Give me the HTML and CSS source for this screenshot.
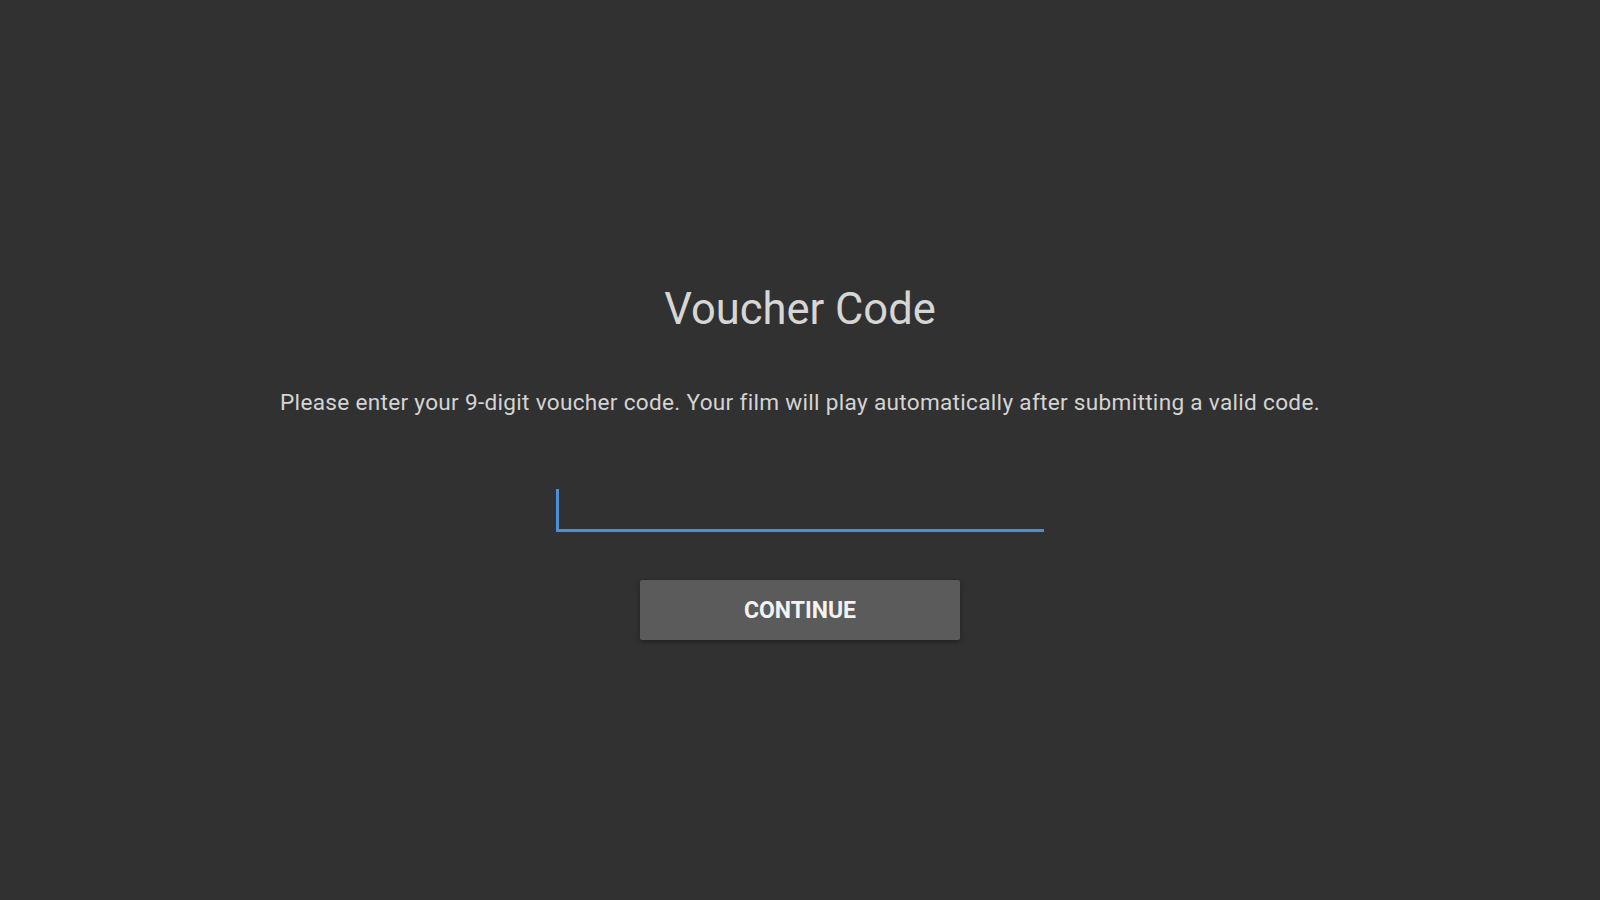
FILE: index.html
```html
<!DOCTYPE html>
<html lang="en">
  <head>
    <meta charset="UTF-8" />
    <meta name="viewport" content="width=device-width, initial-scale=1" />
    <title>Voucher Code</title>
    <link rel="stylesheet" href="styles.css">
  </head>
  <body>
    <main class="voucher">
      <h1>Voucher Code</h1>
      <p class="hint">Please enter your 9-digit voucher code. Your film will play automatically after submitting a valid code.</p>
      <div class="field">
        <span class="caret"></span>
      </div>
      <button class="continue">CONTINUE</button>
    </main>
  </body>
</html>
```

FILE: styles.css
```css
html,
body {
  height: 100%;
}
body {
  margin: 0;
  background: #313131;
  color: #d2d2d2;
  font-family: Roboto, "Liberation Sans", sans-serif;
}
.voucher {
  display: flex;
  flex-direction: column;
  align-items: center;
  padding-top: 282px;
}
.voucher h1 {
  margin: 0;
  font-size: 43.5px;
  font-weight: 400;
  line-height: 56px;
  color: #d6d6d6;
}
.hint {
  margin: 50px 0 0;
  font-size: 22.6px;
  letter-spacing: 0.3px;
  line-height: 30px;
  color: #d4d4d4;
}
.field {
  margin-top: 67px;
  width: 488px;
  height: 44px;
  border-bottom: 3px solid #4a8fd8;
  display: flex;
  align-items: flex-end;
}
.caret {
  width: 3px;
  height: 40px;
  background: #4a8fd8;
}
.continue {
  margin-top: 48px;
  width: 320px;
  height: 60px;
  border: none;
  border-radius: 2px;
  background: #5b5b5c;
  color: #f2f2f2;
  font-family: Roboto, "Liberation Sans", sans-serif;
  font-size: 23px;
  font-weight: 700;
  box-shadow: 0 2px 4px rgba(0, 0, 0, 0.35);
}
```
